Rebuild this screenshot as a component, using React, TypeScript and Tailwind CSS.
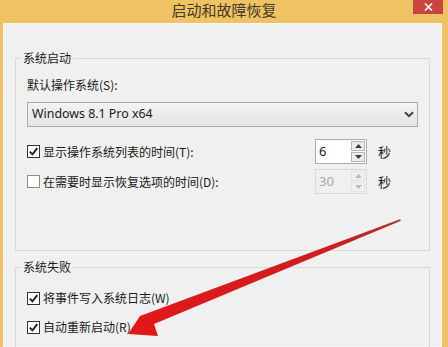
import React from "react";

function CheckBox({ checked }: { checked: boolean }) {
  return (
    <span
      className={`flex h-[13px] w-[13px] shrink-0 items-center justify-center border bg-white ${
        checked ? "border-[#333333]" : "border-[#8c8c8c]"
      }`}
    >
      {checked && (
        <svg width="11" height="11" viewBox="0 0 11 11">
          <path d="M1.8 5.6 L4.4 8.3 L9.3 2.2" fill="none" stroke="#1f1f1f" strokeWidth="1.9" />
        </svg>
      )}
    </span>
  );
}

function Spinner({ value, disabled }: { value: string; disabled?: boolean }) {
  const arrow = disabled ? "#b8b8b8" : "#3c3c3c";
  return (
    <div
      className={`flex h-[25px] w-[52px] border ${
        disabled ? "border-[#d9d9d9] bg-[#f0f0f0]" : "border-[#abadb3] bg-white"
      }`}
    >
      <span
        className={`flex-1 pl-[3px] text-[13px] leading-[23px] font-['Noto_Sans',sans-serif] ${
          disabled ? "text-[#a9a9a9]" : "text-[#1a1a1a]"
        }`}
      >
        {value}
      </span>
      <div className="flex w-[16px] flex-col gap-[1px] p-[1px]">
        <div
          className={`flex flex-1 items-center justify-center border ${
            disabled ? "border-[#e3e3e3] bg-[#f0f0f0]" : "border-[#b5b5b5] bg-[#ececec]"
          }`}
        >
          <svg width="7" height="4" viewBox="0 0 7 4">
            <path d="M0 4 L3.5 0 L7 4 Z" fill={arrow} />
          </svg>
        </div>
        <div
          className={`flex flex-1 items-center justify-center border ${
            disabled ? "border-[#e3e3e3] bg-[#f0f0f0]" : "border-[#b5b5b5] bg-[#ececec]"
          }`}
        >
          <svg width="7" height="4" viewBox="0 0 7 4">
            <path d="M0 0 L3.5 4 L7 0 Z" fill={arrow} />
          </svg>
        </div>
      </div>
    </div>
  );
}

function CheckRow({ checked, label }: { checked: boolean; label: string }) {
  return (
    <div className="flex h-[16px] items-center gap-[3px]">
      <CheckBox checked={checked} />
      <span className="text-[12px] leading-[16px] text-[#1a1a1a]">{label}</span>
    </div>
  );
}

function SpinRow({
  checked,
  label,
  value,
  disabled,
}: {
  checked: boolean;
  label: string;
  value: string;
  disabled?: boolean;
}) {
  return (
    <div className="flex h-[25px] items-center">
      <div className="w-[288px]">
        <CheckRow checked={checked} label={label} />
      </div>
      <Spinner value={value} disabled={disabled} />
      <span className="ml-[11px] text-[13px] text-[#1a1a1a]">秒</span>
    </div>
  );
}

export default function App() {
  return (
    <div className="relative h-[347px] w-[448px] overflow-hidden bg-[#efc263] font-['Noto_Sans_CJK_SC',sans-serif]">
      {/* title bar */}
      <div className="relative flex h-[23px] justify-center">
        <span className="text-[15px] leading-[19px] text-[#43392a]">启动和故障恢复</span>
        <div className="absolute right-[5px] top-0 flex h-[14px] w-[30px] items-center justify-center bg-[#c8443f]">
          <svg width="9" height="8" viewBox="0 0 9 8">
            <path d="M1 0.5 L8 7.5 M8 0.5 L1 7.5" stroke="#ffffff" strokeWidth="1.6" />
          </svg>
        </div>
      </div>

      {/* client area */}
      <div className="ml-[3px] mr-[6px] h-[324px] border border-[#f7f7f7] bg-[#f0f0f0] px-[11px] pt-[26px]">
        <fieldset className="border border-[#d9d9d9] px-[5px] pb-[56px] pt-[11px]">
          <legend className="px-[2px] text-[12px] leading-[16px] text-[#1a1a1a]">系统启动</legend>
          <div className="px-[6px]">
            <div className="h-[16px] text-[12px] leading-[16px] text-[#1a1a1a]">默认操作系统(S):</div>
            <div className="mt-[9px] flex h-[25px] items-center justify-between border border-[#acacac] bg-gradient-to-b from-[#f3f3f3] to-[#e4e4e4] pl-[4px] pr-[3px]">
              <span className="font-['Noto_Sans',sans-serif] text-[12.4px] text-[#1a1a1a]">Windows 8.1 Pro x64</span>
              <svg width="10" height="7" viewBox="0 0 10 7">
                <path d="M1 1.2 L5 5.2 L9 1.2" fill="none" stroke="#404040" strokeWidth="2" />
              </svg>
            </div>
            <div className="mt-[12px]">
              <SpinRow checked label="显示操作系统列表的时间(T):" value="6" />
            </div>
            <div className="mt-[5px]">
              <SpinRow checked={false} label="在需要时显示恢复选项的时间(D):" value="30" disabled />
            </div>
          </div>
        </fieldset>

        <fieldset className="mt-[8px] h-[120px] border border-[#d9d9d9] px-[5px] pt-[15px]">
          <legend className="px-[2px] text-[12px] leading-[16px] text-[#1a1a1a]">系统失败</legend>
          <div className="px-[6px]">
            <CheckRow checked label="将事件写入系统日志(W)" />
            <div className="mt-[13px]">
              <CheckRow checked label="自动重新启动(R)" />
            </div>
          </div>
        </fieldset>
      </div>

      {/* red annotation arrow */}
      <svg className="pointer-events-none absolute left-0 top-0" width="448" height="347" viewBox="0 0 448 347">
        <defs>
          <linearGradient id="shaft" x1="400" y1="220" x2="150" y2="323" gradientUnits="userSpaceOnUse">
            <stop offset="0" stopColor="#a83434" />
            <stop offset="0.25" stopColor="#cc1f1f" />
            <stop offset="1" stopColor="#e01818" />
          </linearGradient>
        </defs>
        <polygon
          points="400,219.3 401,220.8 154,324 158,336 128,334 140,316"
          fill="url(#shaft)"
        />
      </svg>
    </div>
  );
}
